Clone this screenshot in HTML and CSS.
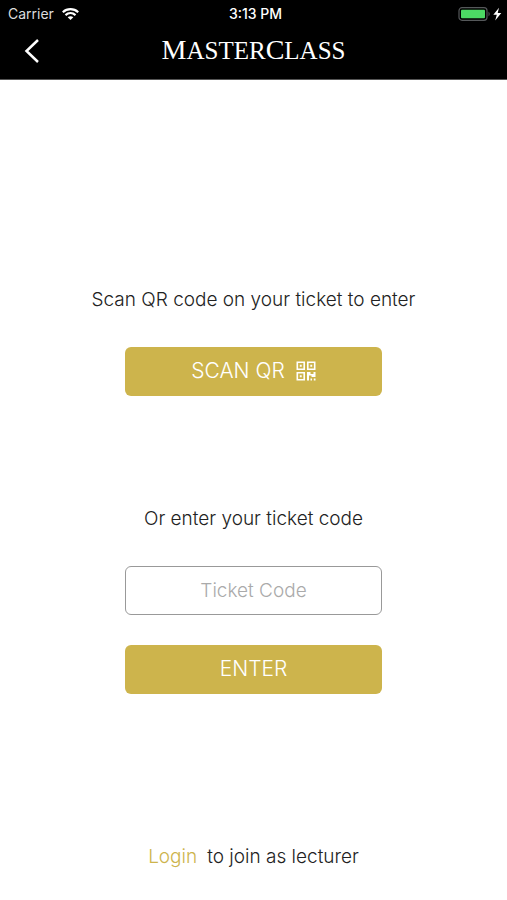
FILE: index.html
```html
<!DOCTYPE html>
<html lang="en">
<head>
<meta charset="utf-8">
<meta name="viewport" content="width=device-width, initial-scale=1">
<title>MasterClass</title>
<link rel="stylesheet" href="styles.css">
</head>
<body>
<header class="header">
  <div class="status">
    <div class="status-side">
      <span>Carrier</span>
      <svg class="wifi" viewBox="0 0 17 12" width="17" height="12" aria-hidden="true">
        <path d="M.8 4.200C5.200.2 11.800.2 16.200 4.200M3.500 7.100C6.400 4.500 10.600 4.500 13.500 7.100" fill="none" stroke="#fff" stroke-width="2.200"/>
        <path d="M5.700 9.300C7.300 7.800 9.700 7.800 11.300 9.300L8.500 12Z" fill="#fff"/>
      </svg>
    </div>
    <span class="time">3:13 PM</span>
    <div class="status-side status-end">
      <svg viewBox="0 0 45 14" width="45" height="14" aria-hidden="true">
        <rect x="1" y=".7" width="28" height="12.600" rx="3" fill="none" stroke="#55585a" stroke-width="1.200"/>
        <rect x="3" y="2.700" width="24" height="8.600" rx="1" fill="#4cd964"/>
        <path d="M30.500 4.500Q33 7 30.500 9.500Z" fill="#55585a"/>
        <path d="M41 .8L35.300 7.800H38.800L37.200 13.400L43.300 6H39.700Z" fill="#fff"/>
      </svg>
    </div>
  </div>
  <div class="navbar">
    <button class="back" type="button" aria-label="Back">
      <svg viewBox="0 0 16 26" width="16" height="26" aria-hidden="true"><path d="M14 2L2.500 13L14 24" fill="none" stroke="#fff" stroke-width="2.500"/></svg>
    </button>
    <h1 class="brand">M<span class="small">ASTER</span>C<span class="small">LASS</span></h1>
  </div>
</header>
<main class="main">
  <section class="group">
    <p class="prompt">Scan QR code on your ticket to enter</p>
    <button class="button" type="button">SCAN QR
      <svg viewBox="0 0 20 20" width="20" height="20" aria-hidden="true">
        <path d="M1.300 1.300H8.200V8.200H1.300ZM11.800 1.300H18.700V8.200H11.800ZM1.300 11.800H8.200V18.700H1.300Z" fill="none" stroke="#fff" stroke-width="1.600"/>
        <path d="M3.800 3.800H5.700V5.700H3.800ZM14.300 3.800H16.200V5.700H14.300ZM3.800 14.300H5.700V16.200H3.800ZM11 11H14.500V13H17.500V11H19.500V16H15.500V14.500H13V19.500H11ZM14.500 17.500H16V19.500H14.500ZM17.800 17.500H19.500V19.500H17.800Z" fill="#fff"/>
      </svg>
    </button>
  </section>
  <form class="group">
    <label class="prompt" for="code">Or enter your ticket code</label>
    <input class="field" id="code" type="text" placeholder="Ticket Code">
    <button class="button" type="button">ENTER</button>
  </form>
</main>
<footer class="footer"><a class="login" href="#">Login</a><span>to join as lecturer</span></footer>
</body>
</html>
```
FILE: styles.css
```css
* {
  box-sizing: border-box;
}

body {
  display: flex;
  flex-direction: column;
  min-height: 100vh;
  margin: 0;
  background: #fff;
  color: #222;
  font-family: Inter, "Liberation Sans", sans-serif;
  font-size: 19px;
  font-weight: 300;
  line-height: 24px;
}

.header {
  padding-bottom: 6px;
  border-bottom: 1px solid #555;
  background: #000;
  color: #fff;
}

.status {
  display: flex;
  align-items: center;
  height: 28px;
  padding: 0 4px 0 8px;
  font-size: 14px;
  font-weight: 400;
}

.status-side {
  display: flex;
  flex: 1;
  align-items: center;
  gap: 8px;
  color: #ddd;
}

.status-end {
  justify-content: flex-end;
}

.time {
  font-weight: 500;
}

.navbar {
  display: grid;
  grid-template-columns: 48px 1fr 48px;
  align-items: center;
  height: 45px;
}

.back {
  display: flex;
  justify-content: flex-end;
  padding: 4px 8px;
  border: 0;
  background: none;
}

.brand {
  margin: 0;
  font-family: "Liberation Serif", serif;
  font-size: 28px;
  font-weight: 400;
  line-height: 32px;
  text-align: center;
}

.small {
  font-size: 25px;
}

.main {
  display: flex;
  flex: 1;
  flex-direction: column;
  align-items: center;
  justify-content: center;
  gap: 111px;
  padding-top: 56px;
}

.group {
  display: flex;
  flex-direction: column;
  align-items: center;
  width: 100%;
}

.prompt {
  margin: 0 0 35px;
}

.button,
.field {
  width: calc(50% + 4px);
  height: 49px;
  border-radius: 6px;
  font: inherit;
}

.button {
  display: flex;
  align-items: center;
  justify-content: center;
  gap: 11px;
  border: 0;
  background: #cdb44c;
  color: #fff;
  font-size: 21px;
}

.field {
  margin-bottom: 30px;
  border: 1px solid #999;
  background: #fff;
  text-align: center;
}

.field::placeholder {
  color: #aaa;
  opacity: 1;
}

.footer {
  display: flex;
  justify-content: center;
  gap: 10px;
  padding-bottom: 31px;
}

.login {
  color: #cdb44c;
  text-decoration: none;
}
```
